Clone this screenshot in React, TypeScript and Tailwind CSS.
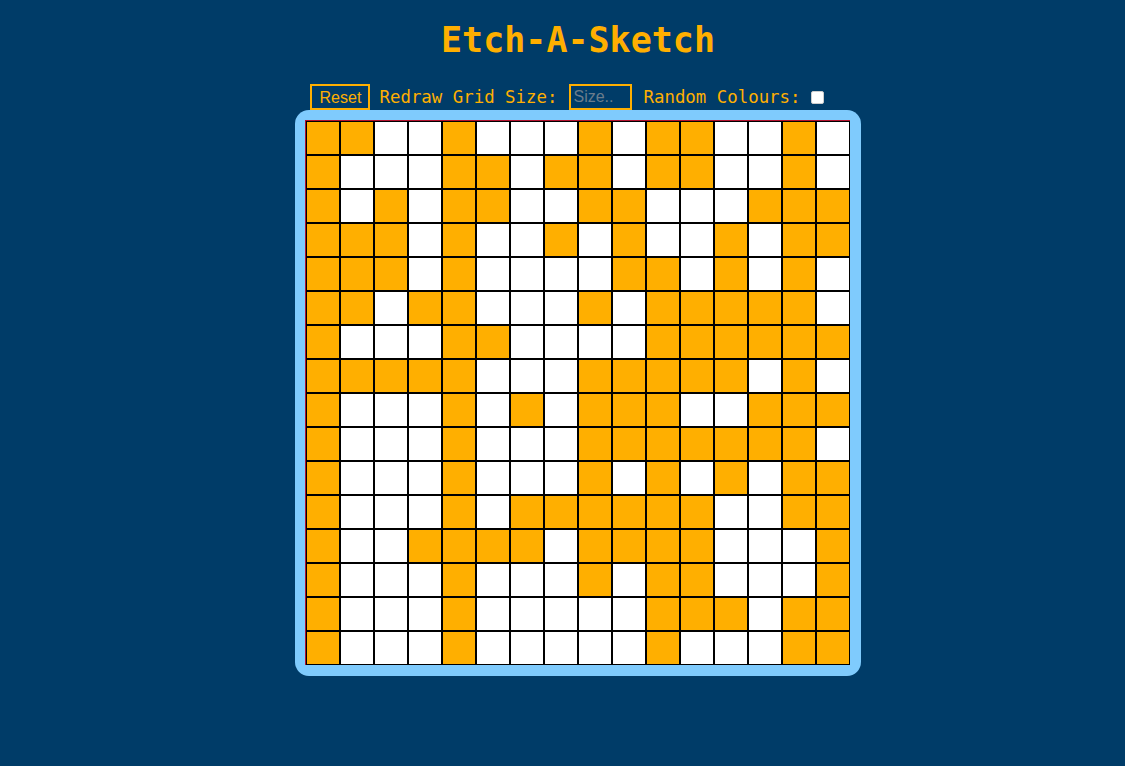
const rows = [
  "OOWWOWWWOWOOWWOW",
  "OWWWOOWOOWOOWWOW",
  "OWOWOOWWOOWWWOOO",
  "OOOWOWWOWOWWOWOO",
  "OOOWOWWWWOOWOWOW",
  "OOWOOWWWOWOOOOOW",
  "OWWWOOWWWWOOOOOO",
  "OOOOOWWWOOOOOWOW",
  "OWWWOWOWOOOWWOOO",
  "OWWWOWWWOOOOOOOW",
  "OWWWOWWWOWOWOWOO",
  "OWWWOWOOOOOOWWOO",
  "OWWOOOOWOOOOWWWO",
  "OWWWOWWWOWOOWWWO",
  "OWWWOWWWWWOOOWOO",
  "OWWWOWWWWWOWWWOO",
]

const mono = { fontFamily: '"DejaVu Sans Mono", "Liberation Mono", monospace' }
const sans = { fontFamily: '"Liberation Sans", Arial, sans-serif' }

export default function App() {
  return (
    <div className="min-h-screen bg-[#003c68]">
      <div className="flex flex-col items-center pl-[31px]">
        {/* Title */}
        <h1
          className="mt-[20px] text-[35px] leading-[40px] font-bold text-[#ffaf00]"
          style={mono}
        >
          Etch-A-Sketch
        </h1>

        {/* Controls */}
        <div className="mt-[24px] flex items-center h-[26px] pr-[22px] text-[#ffaf00]">
          <button
            className="h-[26px] w-[60px] border-2 border-[#ffaf00] text-[16px] text-[#ffaf00] bg-transparent"
            style={sans}
          >
            Reset
          </button>
          <span className="ml-[9px] text-[17.4px]" style={mono}>
            Redraw Grid Size:
          </span>
          <input
            placeholder="Size.."
            className="ml-[12px] h-[26px] w-[63px] border-2 border-[#ffaf00] bg-transparent px-[2px] text-[16px] text-[#ffaf00] placeholder:text-[#6b7c8c] outline-none"
            style={sans}
          />
          <span className="ml-[11px] text-[17.4px]" style={mono}>
            Random Colours:
          </span>
          <input type="checkbox" className="ml-[10px] w-[13px] h-[13px] appearance-none bg-white rounded-[2px] border border-[#ccc]" />
        </div>

        {/* Board */}
        <div className="bg-[#7fcbfd] rounded-[14px] pt-[10px] pl-[10px] pr-[11px] pb-[11px]">
          <div className="border-t border-l border-[#b3122e]">
            <div className="grid grid-cols-[repeat(16,32px)] gap-[2px] p-px bg-black">
              {rows.flatMap((r, i) =>
                r.split("").map((c, j) => (
                  <div
                    key={i + "-" + j}
                    className={c === "O" ? "h-[32px] bg-[#ffaf00]" : "h-[32px] bg-white"}
                  />
                ))
              )}
            </div>
          </div>
        </div>
      </div>
    </div>
  )
}
